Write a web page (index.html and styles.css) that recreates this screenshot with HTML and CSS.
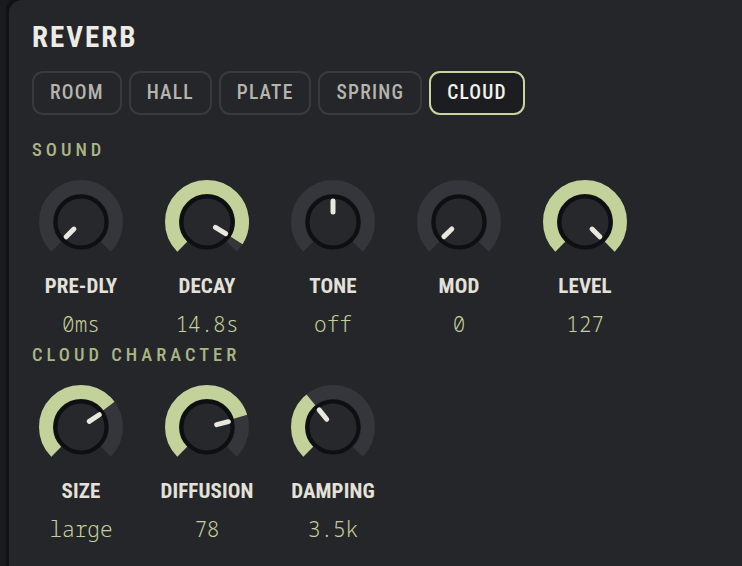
FILE: index.html
```html
<!DOCTYPE html>
<html lang="en">
<head>
<meta charset="utf-8">
<title>Reverb</title>
<link rel="stylesheet" href="styles.css">
</head>
<body>
<div class="panel">
  <h1 class="title">REVERB</h1>
  <div class="tabs">
    <button class="tab">ROOM</button>
    <button class="tab">HALL</button>
    <button class="tab">PLATE</button>
    <button class="tab">SPRING</button>
    <button class="tab tab-active">CLOUD</button>
  </div>

  <section class="group">
    <h2 class="group-label">SOUND</h2>
    <div class="knobs">
      <div class="knob">
        <svg class="dial" viewBox="0 0 84 84" width="84" height="84">
          <path class="track" d="M17.25 66.75 A35 35 0 1 1 66.75 66.75" pathLength="270"/>
          <circle class="cap" cx="42" cy="42" r="25.5"/>
          <line class="pointer" x1="42" y1="32" x2="42" y2="21" transform="rotate(-135 42 42)"/>
        </svg>
        <div class="knob-label">PRE-DLY</div>
        <div class="knob-value">0ms</div>
      </div>
      <div class="knob">
        <svg class="dial" viewBox="0 0 84 84" width="84" height="84">
          <path class="track" d="M17.25 66.75 A35 35 0 1 1 66.75 66.75" pathLength="270"/>
          <path class="fill" d="M17.25 66.75 A35 35 0 1 1 66.75 66.75" pathLength="270" stroke-dasharray="257 999"/>
          <circle class="cap" cx="42" cy="42" r="25.5"/>
          <line class="pointer" x1="42" y1="32" x2="42" y2="20" transform="rotate(122 42 42)"/>
        </svg>
        <div class="knob-label">DECAY</div>
        <div class="knob-value">14.8s</div>
      </div>
      <div class="knob">
        <svg class="dial" viewBox="0 0 84 84" width="84" height="84">
          <path class="track" d="M17.25 66.75 A35 35 0 1 1 66.75 66.75" pathLength="270"/>
          <circle class="cap" cx="42" cy="42" r="25.5"/>
          <line class="pointer" x1="42" y1="32" x2="42" y2="21" transform="rotate(0 42 42)"/>
        </svg>
        <div class="knob-label">TONE</div>
        <div class="knob-value">off</div>
      </div>
      <div class="knob">
        <svg class="dial" viewBox="0 0 84 84" width="84" height="84">
          <path class="track" d="M17.25 66.75 A35 35 0 1 1 66.75 66.75" pathLength="270"/>
          <circle class="cap" cx="42" cy="42" r="25.5"/>
          <line class="pointer" x1="42" y1="32" x2="42" y2="21" transform="rotate(-134 42 42)"/>
        </svg>
        <div class="knob-label">MOD</div>
        <div class="knob-value">0</div>
      </div>
      <div class="knob">
        <svg class="dial" viewBox="0 0 84 84" width="84" height="84">
          <path class="track" d="M17.25 66.75 A35 35 0 1 1 66.75 66.75" pathLength="270"/>
          <path class="fill" d="M17.25 66.75 A35 35 0 1 1 66.75 66.75" pathLength="270" stroke-dasharray="270 999"/>
          <circle class="cap" cx="42" cy="42" r="25.5"/>
          <line class="pointer" x1="42" y1="32" x2="42" y2="21" transform="rotate(135 42 42)"/>
        </svg>
        <div class="knob-label">LEVEL</div>
        <div class="knob-value">127</div>
      </div>
    </div>
  </section>

  <section class="group">
    <h2 class="group-label">CLOUD CHARACTER</h2>
    <div class="knobs">
      <div class="knob">
        <svg class="dial" viewBox="0 0 84 84" width="84" height="84">
          <path class="track" d="M17.25 66.75 A35 35 0 1 1 66.75 66.75" pathLength="270"/>
          <path class="fill" d="M17.25 66.75 A35 35 0 1 1 66.75 66.75" pathLength="270" stroke-dasharray="188 999"/>
          <circle class="cap" cx="42" cy="42" r="25.5"/>
          <line class="pointer" x1="42" y1="32" x2="42" y2="20" transform="rotate(56 42 42)"/>
        </svg>
        <div class="knob-label">SIZE</div>
        <div class="knob-value">large</div>
      </div>
      <div class="knob">
        <svg class="dial" viewBox="0 0 84 84" width="84" height="84">
          <path class="track" d="M17.25 66.75 A35 35 0 1 1 66.75 66.75" pathLength="270"/>
          <path class="fill" d="M17.25 66.75 A35 35 0 1 1 66.75 66.75" pathLength="270" stroke-dasharray="208 999"/>
          <circle class="cap" cx="42" cy="42" r="25.5"/>
          <line class="pointer" x1="42" y1="32" x2="42" y2="20" transform="rotate(76 42 42)"/>
        </svg>
        <div class="knob-label">DIFFUSION</div>
        <div class="knob-value">78</div>
      </div>
      <div class="knob">
        <svg class="dial" viewBox="0 0 84 84" width="84" height="84">
          <path class="track" d="M17.25 66.75 A35 35 0 1 1 66.75 66.75" pathLength="270"/>
          <path class="fill" d="M17.25 66.75 A35 35 0 1 1 66.75 66.75" pathLength="270" stroke-dasharray="96 999"/>
          <circle class="cap" cx="42" cy="42" r="25.5"/>
          <line class="pointer" x1="42" y1="32" x2="42" y2="20" transform="rotate(-39 42 42)"/>
        </svg>
        <div class="knob-label">DAMPING</div>
        <div class="knob-value">3.5k</div>
      </div>
    </div>
  </section>
</div>
</body>
</html>
```
FILE: styles.css
```css
html, body {
  margin: 0;
  padding: 0;
  height: 100%;
  background: #1a1b1e;
  overflow: hidden;
}

body {
  box-sizing: border-box;
  padding: 0 0 0 9px;
}

.panel {
  height: 100%;
  box-sizing: border-box;
  background: #25262a;
  border-radius: 13px 0 0 0;
  box-shadow: -3px 0 0 #111214, -2px -2px 0 1px #111214;
  padding: 23px 0 0 23px;
  overflow: hidden;
}

.title {
  margin: 0;
  font-family: Roboto, "Liberation Sans", sans-serif;
  font-stretch: 75%;
  font-weight: 700;
  font-size: 29px;
  line-height: 29px;
  letter-spacing: 2px;
  color: #ecebe4;
}

.tabs {
  display: flex;
  gap: 7px;
  margin-top: 19px;
}

.tab {
  height: 44px;
  box-sizing: border-box;
  padding: 0 16px;
  border: 2px solid #393a3f;
  border-radius: 11px;
  background: transparent;
  font-family: Roboto, "Liberation Sans", sans-serif;
  font-stretch: 75%;
  font-weight: 500;
  font-size: 19.5px;
  line-height: 1;
  letter-spacing: 1.2px;
  color: #b5b5ae;
  cursor: pointer;
}

.tab-active {
  border-color: #c9d59f;
  background: #1c1d20;
  color: #f2f1ea;
}

.group-label {
  margin: 26px 0 0;
  font-family: Roboto, "Liberation Sans", sans-serif;
  font-stretch: 75%;
  font-weight: 500;
  font-size: 18.5px;
  line-height: 19px;
  letter-spacing: 4px;
  color: #a9b585;
}

.group + .group .group-label {
  margin-top: 11px;
}

.knobs {
  display: flex;
  gap: 28px;
  margin-top: 20px;
}

.knob {
  width: 98px;
  display: flex;
  flex-direction: column;
  align-items: center;
}

.dial {
  display: block;
}

.track {
  fill: none;
  stroke: #34363b;
  stroke-width: 14;
}

.fill {
  fill: none;
  stroke: #c3d29b;
  stroke-width: 14;
}

.cap {
  fill: #27282c;
  stroke: #0e0f11;
  stroke-width: 4;
}

.pointer {
  stroke: #e9e7de;
  stroke-width: 5;
  stroke-linecap: round;
}

.knob-label {
  margin-top: 12px;
  font-family: Roboto, "Liberation Sans", sans-serif;
  font-stretch: 75%;
  font-weight: 700;
  font-size: 21px;
  line-height: 21px;
  letter-spacing: 0.1px;
  color: #e3e1d8;
  white-space: nowrap;
}

.knob-value {
  margin-top: 17px;
  font-family: "Noto Sans Mono", "DejaVu Sans Mono", monospace;
  font-weight: 350;
  font-size: 21px;
  line-height: 21px;
  color: #c5d09b;
  white-space: nowrap;
}
```
